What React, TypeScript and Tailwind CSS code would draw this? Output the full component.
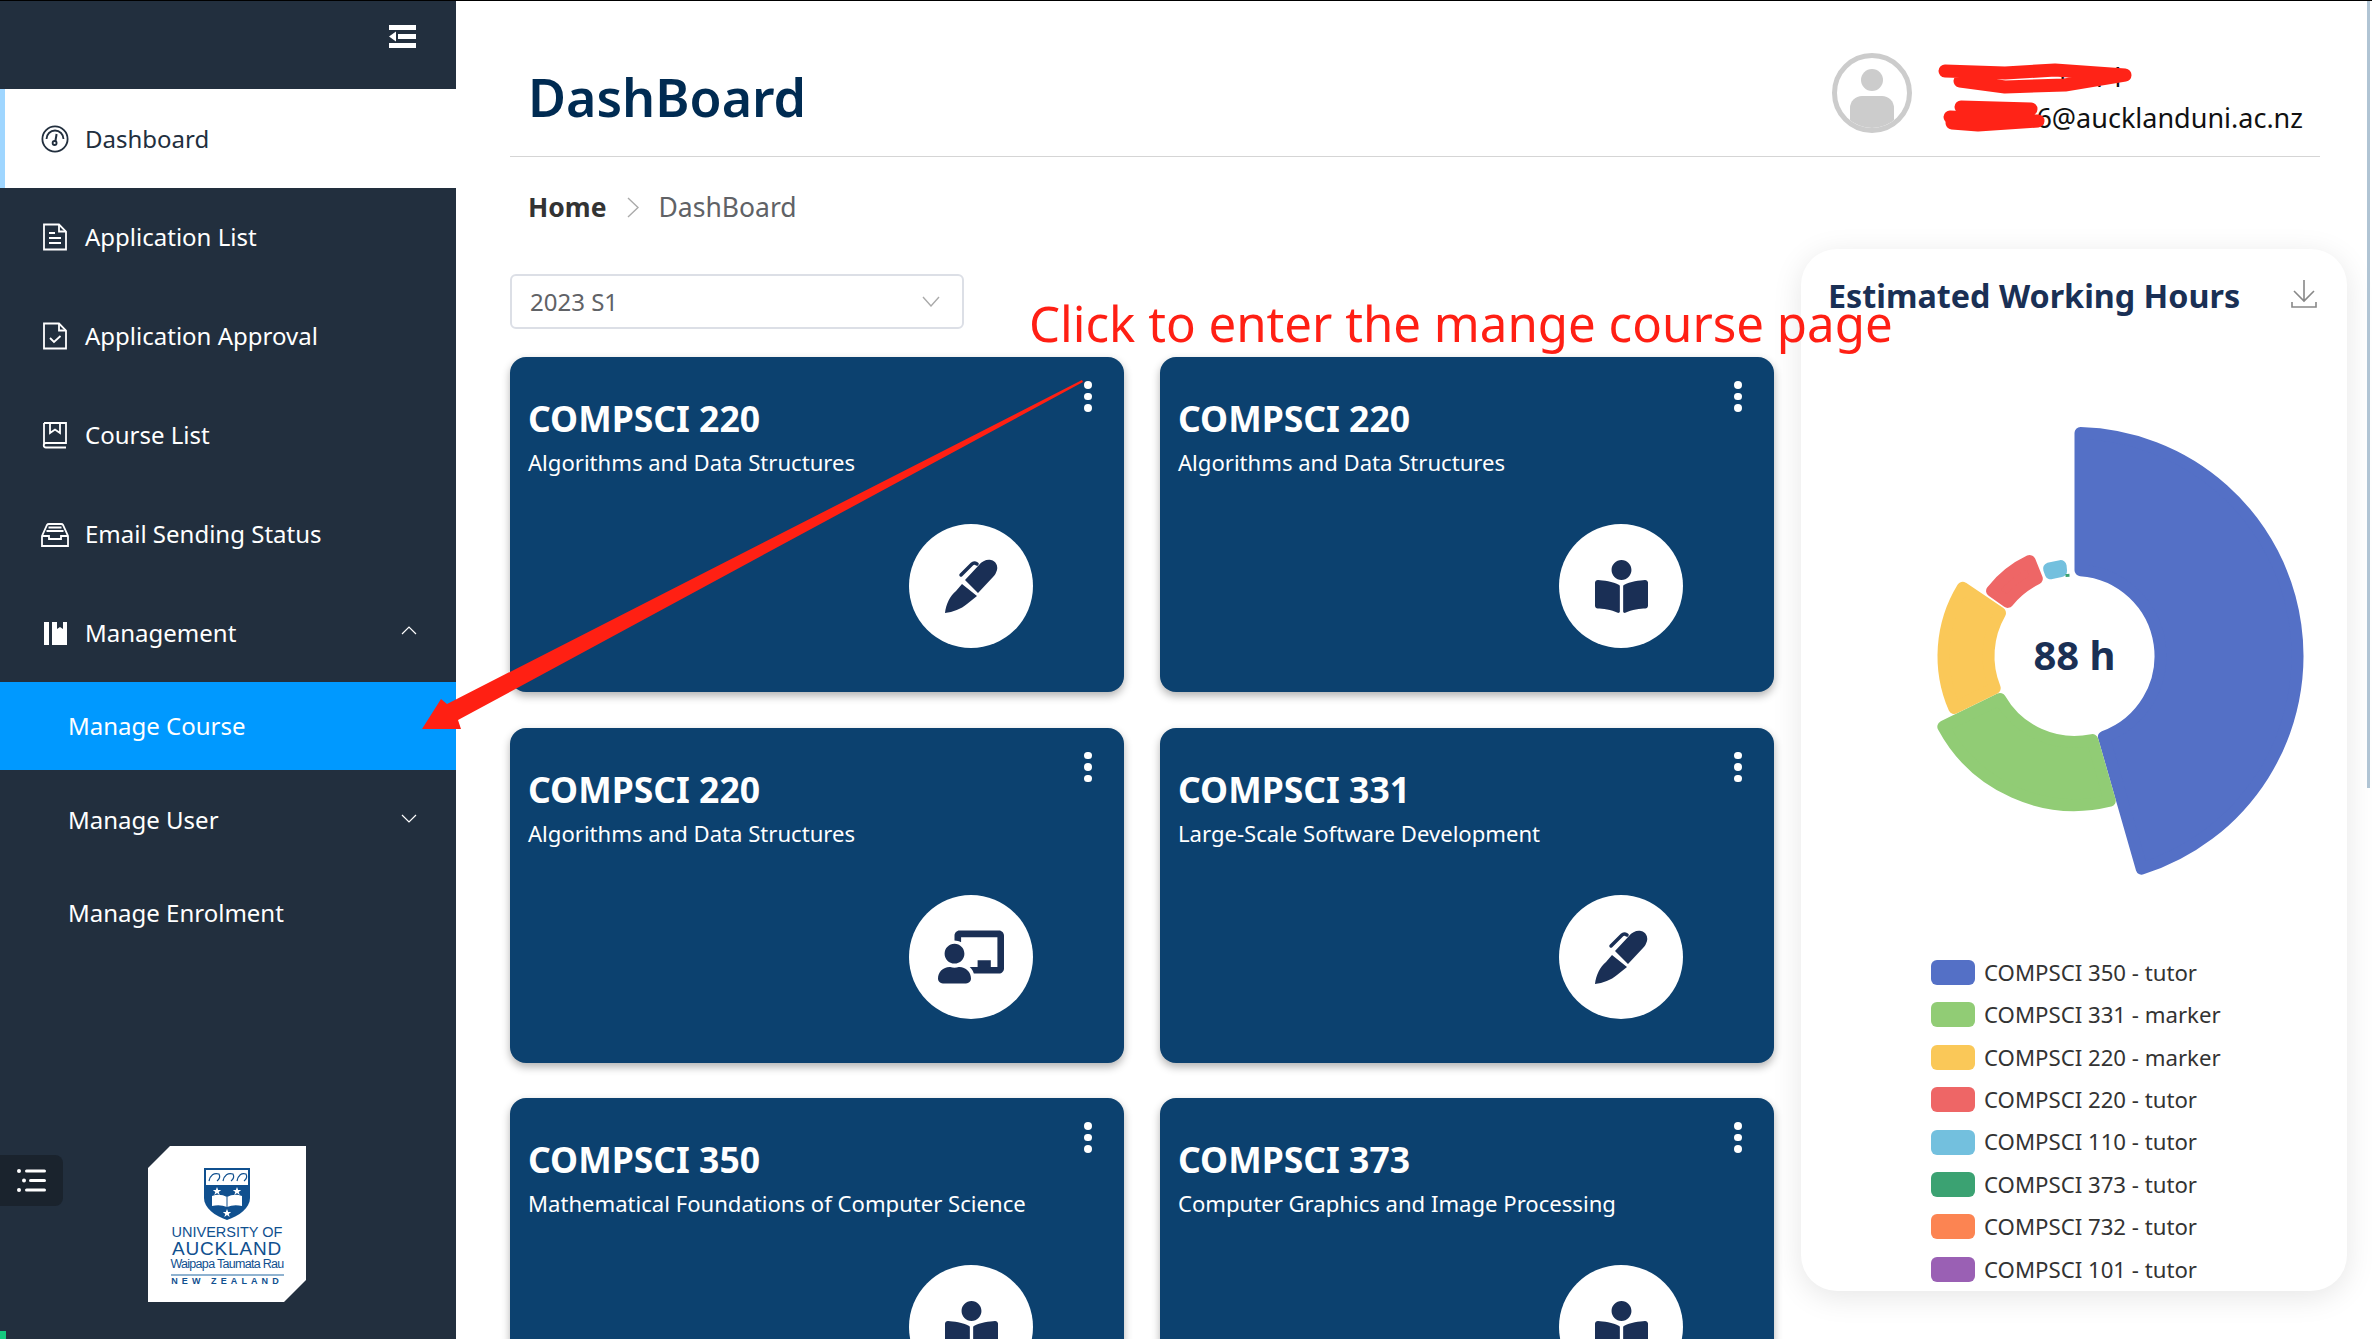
import { FaBookReader, FaChalkboardTeacher } from 'react-icons/fa';
import type { ReactNode } from 'react';

const iconProps = {
  width: 28,
  height: 28,
  viewBox: '0 0 28 28',
  fill: 'none',
  stroke: 'currentColor',
  strokeWidth: 1.8,
};

function GaugeIcon() {
  return (
    <svg {...iconProps}>
      <circle cx="14" cy="14" r="12.6" />
      <path d="M5.5 14a8.5 8.5 0 0 1 17 0" />
      <path d="M15.6 9l-1.2 7" strokeWidth="2" />
      <circle cx="13.6" cy="18" r="2" />
    </svg>
  );
}

function DocIcon() {
  return (
    <svg {...iconProps}>
      <path d="M3 1.5h15l7 7v18H3z" />
      <path d="M18 1.5v7h7" />
      <path d="M8 10h6M8 15h12M8 20h12" />
    </svg>
  );
}

function DocCheckIcon() {
  return (
    <svg {...iconProps}>
      <path d="M3 1.5h15l7 7v18H3z" />
      <path d="M18 1.5v7h7" />
      <path d="M9 16l4 4 6.5-6" />
    </svg>
  );
}

function NotebookIcon() {
  return (
    <svg {...iconProps}>
      <path d="M3 2h22v20H5a2 2 0 0 0 0 4.5h20M3 24V2" />
      <path d="M9 2v10l5-3.5 5 3.5V2" />
    </svg>
  );
}

function InboxIcon() {
  return (
    <svg {...iconProps}>
      <path d="M1 16l5-11q.5-1 2-1h12q1.500 0 2 1l5 11v10H1z" />
      <path d="M1 16h7v3h12v-3h7" />
      <path d="M5.500 11h17M7.500 7.500h13" />
    </svg>
  );
}

function ManagementIcon() {
  return (
    <svg width={28} height={28} viewBox="0 0 28 28" fill="currentColor">
      <path d="M3 3h5v23H3z" />
      <path d="M11 3h5v7l3-2 3 2V3h4v23H11z" />
    </svg>
  );
}

function Chevron({ up }: { up?: boolean }) {
  return (
    <svg width="16" height="9" viewBox="0 0 16 9" fill="none" stroke="currentColor" strokeWidth="1.2">
      <path d={up ? 'M1 8l7-7 7 7' : 'M1 1l7 7 7-7'} />
    </svg>
  );
}

function PenIcon() {
  return (
    <svg width="80" height="80" viewBox="0 0 80 80" fill="#1a2f55">
      <path d="M14 67c1-9 5-17 11-22l6-7 15 12-10 8c-6 5-14 8-22 9z" />
      <path d="M34 34l14-15c3-4 8-6 12-5 5 1 7 6 6 10-1 3-2 5-4 7L47 47z" />
      <path d="M30 29l11-11q2-2 5 0" fill="none" stroke="#1a2f55" strokeWidth="3.500" strokeLinecap="round" />
    </svg>
  );
}

function ReaderIcon() {
  return <FaBookReader size={53} color="#1a2f55" />;
}

function TeacherIcon() {
  return <FaChalkboardTeacher size={66} color="#1a2f55" />;
}

const navItems: { label: string; icon: ReactNode; active?: boolean }[] = [
  { label: 'Dashboard', icon: <GaugeIcon />, active: true },
  { label: 'Application List', icon: <DocIcon /> },
  { label: 'Application Approval', icon: <DocCheckIcon /> },
  { label: 'Course List', icon: <NotebookIcon /> },
  { label: 'Email Sending Status', icon: <InboxIcon /> },
];

const courses = [
  { code: 'COMPSCI 220', name: 'Algorithms and Data Structures', icon: <PenIcon /> },
  { code: 'COMPSCI 220', name: 'Algorithms and Data Structures', icon: <ReaderIcon /> },
  { code: 'COMPSCI 220', name: 'Algorithms and Data Structures', icon: <TeacherIcon /> },
  { code: 'COMPSCI 331', name: 'Large-Scale Software Development', icon: <PenIcon /> },
  { code: 'COMPSCI 350', name: 'Mathematical Foundations of Computer Science', icon: <ReaderIcon /> },
  { code: 'COMPSCI 373', name: 'Computer Graphics and Image Processing', icon: <ReaderIcon /> },
];

const legend = [
  { label: 'COMPSCI 350 - tutor', color: '#5470c6' },
  { label: 'COMPSCI 331 - marker', color: '#91cc75' },
  { label: 'COMPSCI 220 - marker', color: '#fac858' },
  { label: 'COMPSCI 220 - tutor', color: '#ee6666' },
  { label: 'COMPSCI 110 - tutor', color: '#73c0de' },
  { label: 'COMPSCI 373 - tutor', color: '#3ba272' },
  { label: 'COMPSCI 732 - tutor', color: '#fc8452' },
  { label: 'COMPSCI 101 - tutor', color: '#9a60b4' },
];

// rose chart slices: angles in degrees clockwise from top, r is the outer radius
const slices = [
  { color: '#5470c6', from: 0, to: 164, r: 229 },
  { color: '#91cc75', from: 164, to: 244, r: 155 },
  { color: '#fac858', from: 244, to: 304, r: 137 },
  { color: '#ee6666', from: 305, to: 338, r: 111 },
  { color: '#73c0de', from: 340, to: 355, r: 97 },
];

function slicePath(from: number, to: number, outer: number, inset: number) {
  const inner = 80;
  const ri = inner + inset;
  const ro = outer - inset;
  const pt = (r: number, deg: number, shift: number) => {
    const a = (deg * Math.PI) / 180 + shift / r;
    return `${(Math.sin(a) * r).toFixed(2)} ${(-Math.cos(a) * r).toFixed(2)}`;
  };
  const large = to - from > 180 ? 1 : 0;
  return [
    `M${pt(ri, from, inset)}`,
    `L${pt(ro, from, inset)}`,
    `A${ro} ${ro} 0 ${large} 1 ${pt(ro, to, -inset)}`,
    `L${pt(ri, to, -inset)}`,
    `A${ri} ${ri} 0 ${large} 0 ${pt(ri, from, inset)}Z`,
  ].join(' ');
}

function Sidebar() {
  return (
    <aside className="relative flex h-full w-[456px] shrink-0 flex-col bg-[#222f3e] text-white">
      <div className="flex h-[88px] shrink-0 justify-end pr-[40px] pt-[24px]">
        <svg width="27" height="23" viewBox="0 0 27 23" fill="#fff">
          <path d="M0 0h27v5H0zM9 9h18v5H9zM0 18h27v5H0zM7 6.500v10l-7-5z" />
        </svg>
      </div>
      {navItems.map((item) => (
        <div
          key={item.label}
          className={`flex h-[99px] shrink-0 items-center gap-[16px] text-[24px] ${
            item.active ? 'border-l-[5px] border-[#9fd6ff] bg-white pl-[36px] text-[#222f3e]' : 'pb-[2px] pl-[41px]'
          }`}
        >
          {item.icon}
          <span>{item.label}</span>
        </div>
      ))}
      <div className="flex h-[98px] shrink-0 items-center gap-[16px] pl-[41px] text-[24px]">
        <ManagementIcon />
        <span>Management</span>
        <span className="mb-[6px] ml-auto mr-[39px]">
          <Chevron up />
        </span>
      </div>
      <div className="flex h-[88px] shrink-0 items-center bg-[#0099ff] pl-[68px] text-[24px]">Manage Course</div>
      <div className="flex h-[100px] shrink-0 items-center pl-[68px] text-[24px]">
        <span>Manage User</span>
        <span className="mb-[4px] ml-auto mr-[39px]">
          <Chevron />
        </span>
      </div>
      <div className="flex h-[86px] shrink-0 items-center pl-[68px] text-[24px]">Manage Enrolment</div>
      <div className="mt-auto mb-[37px] flex items-start">
        <div className="mt-[9px] flex h-[51px] w-[63px] items-center justify-center rounded-r-lg bg-[#1a232d]">
          <svg width="29" height="25" viewBox="0 0 29 25" fill="#fff">
            <circle cx="2" cy="3" r="2" />
            <circle cx="7" cy="12.500" r="2" />
            <circle cx="2" cy="22" r="2" />
            <rect x="8" y="1.500" width="21" height="3" rx="1.500" />
            <rect x="12" y="11" width="17" height="3" rx="1.500" />
            <rect x="8" y="20.500" width="21" height="3" rx="1.500" />
          </svg>
        </div>
        <div className="ml-[85px] flex h-[156px] w-[158px] flex-col items-center bg-white pt-[22px] font-['Liberation_Sans',sans-serif] text-[#10508f] [clip-path:polygon(22px_0,100%_0,100%_calc(100%-22px),calc(100%-22px)_100%,0_100%,0_22px)]">
          <svg width="46" height="52" viewBox="0 0 46 52">
            <path d="M0 0h46v30c0 10-11 18-23 22C11 48 0 40 0 30z" fill="#10508f" />
            <path d="M2 2h42v15H2z" fill="#fff" />
            <path d="M5 13q2-9 10-7 2 4-2 7M19 13q2-9 10-7 2 4-2 7M33 13q2-9 9-7 2 4-2 7" fill="none" stroke="#10508f" strokeWidth="1.200" />
            <path d="M13 19l1.200 3h3l-2.500 2 1 3-2.700-2-2.700 2 1-3-2.500-2h3zM33 19l1.200 3h3l-2.500 2 1 3-2.700-2-2.700 2 1-3-2.500-2h3zM23 41l1.200 3h3l-2.500 2 1 3-2.700-2-2.700 2 1-3-2.500-2h3z" fill="#fff" />
            <path d="M8 28q8-3 15 1 7-4 15-1v10q-8-2-15 1-7-3-15-1z" fill="#fff" />
            <path d="M23 29v10" stroke="#10508f" />
          </svg>
          <div className="mt-[4px] text-[14.5px] leading-[17px] whitespace-nowrap">UNIVERSITY OF</div>
          <div className="text-[19px] leading-[15px] tracking-[0.8px] whitespace-nowrap">AUCKLAND</div>
          <div className="text-[12.5px] leading-[16px] tracking-[-0.7px] whitespace-nowrap">Waipapa Taumata Rau</div>
          <div className="mt-[2px] w-[113px] border-t-2 border-[#8fb2d0] text-center text-[9px] leading-[10px] font-bold tracking-[4.1px] whitespace-nowrap">NEW ZEALAND</div>
        </div>
      </div>
      <div className="absolute bottom-0 left-0 h-[8px] w-[6px] bg-[#14c97f]" />
    </aside>
  );
}

function CourseCard({ code, name, icon }: { code: string; name: string; icon: ReactNode }) {
  return (
    <div className="relative h-[335px] rounded-2xl bg-[#0c416f] pl-[18px] pt-[41px] text-white shadow-[0_4px_8px_rgba(0,0,0,0.3)]">
      <div className="absolute right-[32px] top-[24px] flex flex-col gap-[4px]">
        <span className="h-[7.500px] w-[8px] rounded-full bg-white" />
        <span className="h-[7.500px] w-[8px] rounded-full bg-white" />
        <span className="h-[7.500px] w-[8px] rounded-full bg-white" />
      </div>
      <div className="text-[35.5px] leading-[40px] font-bold">{code}</div>
      <div className="mt-[4px] text-[22.1px] leading-[40px]">{name}</div>
      <div className="absolute left-[399px] top-[167px] flex h-[124px] w-[124px] items-center justify-center rounded-full bg-white">
        {icon}
      </div>
    </div>
  );
}

function HoursPanel() {
  return (
    <section className="h-[1042px] w-[546px] shrink-0 rounded-[36px] bg-white shadow-[0_6px_30px_rgba(0,0,0,0.1)]">
      <div className="flex h-[96px] items-start justify-between pl-[27px] pr-[30px] pt-[22px]">
        <h2 className="text-[32.3px] leading-[48px] font-bold text-[#1a3055]">Estimated Working Hours</h2>
        <svg className="mt-[9px]" width="26" height="28" viewBox="0 0 26 28" fill="none" stroke="#888" strokeWidth="1.600">
          <path d="M13 0v20M3 11l10 10 10-10M1 22v5h24v-5" />
        </svg>
      </div>
      <svg className="block" width="546" height="600" viewBox="-273.5 -311 546 600">
        {slices.map((s) => (
          <path
            key={s.color}
            d={slicePath(s.from, s.to, s.r, 6)}
            fill={s.color}
            stroke={s.color}
            strokeWidth="12"
            strokeLinejoin="round"
          />
        ))}
        <path d="M-9 -80.500a80 80 0 0 1 4 -.3" stroke="#3ba272" strokeWidth="3" fill="none" />
        <text x="0" y="14" textAnchor="middle" fontSize="40" fontWeight="700" fill="#1a3055">
          88 h
        </text>
      </svg>
      <ul className="mt-[15px] flex flex-col gap-[17.4px] pl-[130px]">
        {legend.map((row) => (
          <li key={row.label} className="flex h-[25px] items-center gap-[9px] text-[22.2px] text-[#333]">
            <span className="h-[25px] w-[44px] rounded-[6px]" style={{ backgroundColor: row.color }} />
            {row.label}
          </li>
        ))}
      </ul>
    </section>
  );
}

function Annotations() {
  return (
    <>
      <div className="absolute left-[1029px] top-[282px] text-[49.200px] leading-[80px] whitespace-nowrap text-[#ff1f14]">
        Click to enter the mange course page
      </div>
      <svg className="absolute left-0 top-0" width="2372" height="1339" fill="none">
        <path d="M1082 379L447 703 441 698 422 728H461L458 719 1083 381z" fill="#ff2013" />
        <path d="M1945 70l60 2 50-3 70 5-60 10-60 2-45-6" stroke="#ff2317" strokeWidth="13" strokeLinecap="round" strokeLinejoin="round" />
        <path d="M1961 106l70 2M1950 116l88 4-60 4-26-2" stroke="#ff2317" strokeWidth="13" strokeLinecap="round" strokeLinejoin="round" />
      </svg>
    </>
  );
}

export default function App() {
  return (
    <div className="relative flex h-[1339px] w-[2372px] overflow-hidden border-t border-black bg-white font-['Noto_Sans',sans-serif]">
      <Sidebar />
      <main className="min-w-0 flex-1 pl-[54px]">
        <header className="flex h-[156px] w-[1810px] items-start justify-between border-b border-[#d5d5d5] pl-[18px] pr-[17px]">
          <h1 className="mt-[64px] text-[52px] leading-[64px] font-semibold text-[#002b52]">DashBoard</h1>
          <div className="mt-[52px] flex gap-[38px]">
            <div className="relative h-[80px] w-[80px] overflow-hidden rounded-full border-[5px] border-[#ccc]">
              <span className="absolute left-[24px] top-[11px] h-[22px] w-[22px] rounded-full bg-[#ccc]" />
              <span className="absolute left-[13px] top-[38px] h-[40px] w-[44px] rounded-t-xl bg-[#ccc]" />
            </div>
            <div className="w-[353px] pt-[3px] text-right text-[27px] leading-[41px] text-[#111]">
              <div className="pr-[175px] tracking-[3px]">1111</div>
              <div>6@aucklanduni.ac.nz</div>
            </div>
          </div>
        </header>
        <div className="flex h-[92px] items-start pl-[18px] pt-[30px] text-[26.5px] leading-[40px]">
          <span className="font-bold text-[#333]">Home</span>
          <svg className="ml-[20px] mt-[10px]" width="12" height="21" viewBox="0 0 12 21" fill="none" stroke="#aaa" strokeWidth="1.400">
            <path d="M1 1l10 9.500L1 20" />
          </svg>
          <span className="ml-[20px] text-[#606266]">DashBoard</span>
        </div>
        <div className="flex w-[1837px] items-start justify-between">
          <div className="w-[1264px]">
            <div className="mt-[25px] mb-[28px] flex h-[55px] w-[454px] items-center justify-between rounded-md border-2 border-[#dcdfe6] pl-[18px] pr-[22px] text-[24px] text-[#606266]">
              <span>2023 S1</span>
              <svg className="text-[#aaa]" width="18" height="11" viewBox="0 0 18 11" fill="none" stroke="currentColor" strokeWidth="1.400">
                <path d="M1 1l8 9 8-9" />
              </svg>
            </div>
            <div className="grid grid-cols-2 gap-x-[36px] gap-y-[35.5px]">
              {courses.map((course, i) => (
                <CourseCard key={i} {...course} />
              ))}
            </div>
          </div>
          <HoursPanel />
        </div>
      </main>
      <div className="absolute right-[2px] top-0 h-[787px] w-[3px] bg-[#b0c4d4]" />
      <Annotations />
    </div>
  );
}
